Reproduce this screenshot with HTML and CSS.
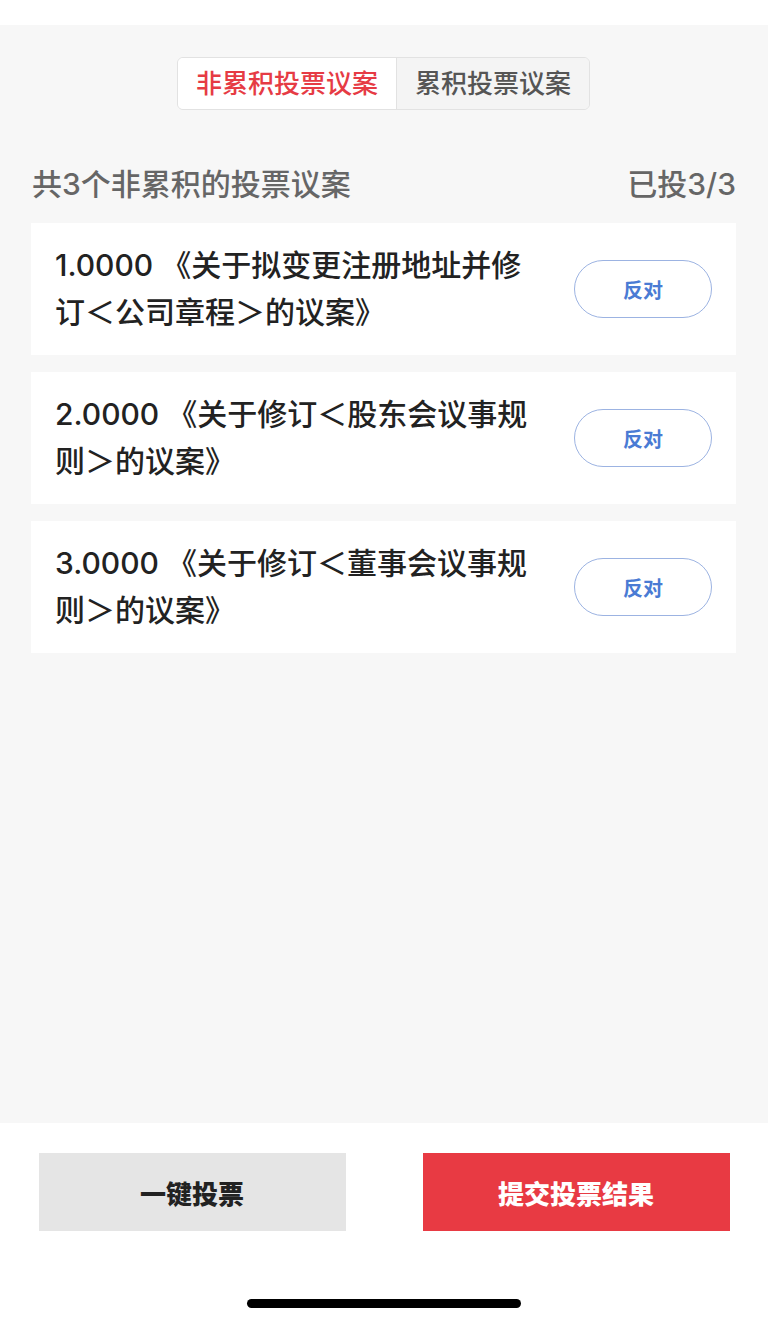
FILE: index.html
```html
<!DOCTYPE html>
<html lang="zh">
<head>
<meta charset="utf-8">
<link rel="stylesheet" href="styles.css">
</head>
<body>
<div class="screen">
  <div class="status"></div>
  <main class="main">
    <div class="tabs">
      <div class="tab active">非累积投票议案</div>
      <div class="tab">累积投票议案</div>
    </div>
    <div class="summary">
      <span>共3个非累积的投票议案</span>
      <span>已投3/3</span>
    </div>
    <div class="list">
      <div class="card">
        <div class="title">1.0000 《关于拟变更注册地址并修订＜公司章程＞的议案》</div>
        <div class="vote">反对</div>
      </div>
      <div class="card">
        <div class="title">2.0000 《关于修订＜股东会议事规则＞的议案》</div>
        <div class="vote">反对</div>
      </div>
      <div class="card">
        <div class="title">3.0000 《关于修订＜董事会议事规则＞的议案》</div>
        <div class="vote">反对</div>
      </div>
    </div>
  </main>
  <footer class="footer">
    <div class="actions">
      <div class="btn btn-gray">一键投票</div>
      <div class="btn btn-red">提交投票结果</div>
    </div>
    <div class="home-bar"></div>
  </footer>
</div>
</body>
</html>
```
FILE: styles.css
```css
html, body {
  margin: 0;
  padding: 0;
}
body {
  font-family: Inter, "Noto Sans CJK SC", sans-serif;
  background: #ffffff;
}
.screen {
  width: 768px;
  height: 1323px;
  display: flex;
  flex-direction: column;
  overflow: hidden;
}
.status {
  height: 25px;
  background: #ffffff;
  flex: none;
}
.main {
  flex: 1;
  background: #f7f7f7;
  padding: 32px 32px 0 31px;
  display: flex;
  flex-direction: column;
}
.tabs {
  align-self: center;
  display: flex;
  border: 1px solid #e2e2e2;
  border-radius: 6px;
  overflow: hidden;
  height: 51px;
}
.tab {
  padding: 0 18px;
  font-size: 26px;
  line-height: 51px;
  font-weight: 500;
  color: #555555;
  background: #f4f4f4;
}
.tab.active {
  color: #e63b44;
  background: #ffffff;
  border-right: 1px solid #e2e2e2;
}
.summary {
  display: flex;
  justify-content: space-between;
  margin-top: 54px;
  font-size: 30px;
  line-height: 40px;
  font-weight: 500;
  color: #666666;
  padding-left: 1px;
}
.list {
  margin-top: 19px;
  display: flex;
  flex-direction: column;
  gap: 17px;
}
.card {
  background: #ffffff;
  display: flex;
  align-items: center;
  justify-content: space-between;
  padding: 19px 24px;
  min-height: 94px;
}
.title {
  width: 490px;
  font-size: 30px;
  line-height: 47px;
  color: #222222;
  font-weight: 500;
}
.vote {
  width: 136px;
  height: 56px;
  border: 1px solid #9cb3e2;
  border-radius: 29px;
  display: flex;
  align-items: center;
  justify-content: center;
  font-size: 20px;
  font-weight: 700;
  color: #4a7bd4;
}
.footer {
  height: 200px;
  flex: none;
  background: #ffffff;
  display: flex;
  flex-direction: column;
  align-items: center;
}
.actions {
  margin-top: 30px;
  width: 691px;
  display: flex;
  justify-content: space-between;
}
.btn {
  width: 307px;
  height: 78px;
  display: flex;
  align-items: center;
  justify-content: center;
  font-size: 26px;
  font-weight: 900;
}
.btn-gray {
  background: #e5e5e5;
  color: #222222;
}
.btn-red {
  background: #e83a43;
  color: #ffffff;
}
.home-bar {
  margin-top: 68px;
  width: 274px;
  height: 9px;
  border-radius: 5px;
  background: #000000;
}
```
